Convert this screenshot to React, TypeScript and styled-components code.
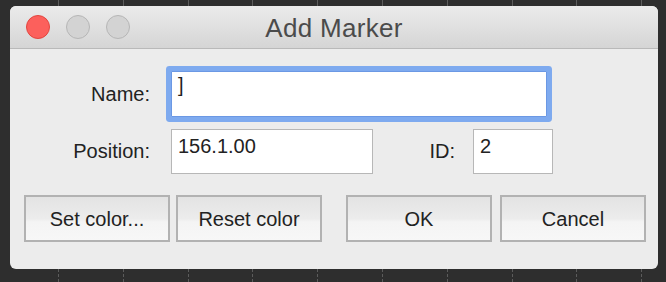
import React from "react";
import styled, { createGlobalStyle } from "styled-components";

const Global = createGlobalStyle`
  html, body { margin: 0; padding: 0; }
  body {
    width: 666px;
    height: 282px;
    overflow: hidden;
    background: #2e2e2e;
    font-family: "Liberation Sans", Arial, sans-serif;
  }
`;

const ticks = `repeating-linear-gradient(
    to right,
    transparent 0 58px,
    #5c5c5c 58px 59px,
    transparent 59px 64.8px
  )`;

const Desk = styled.div`
  width: 666px;
  height: 282px;
  box-sizing: border-box;
  padding: 6px 8px 0 10px;
  background-color: #2e2e2e;
  background-image:
    repeating-linear-gradient(to bottom, transparent 0 3px, #2e2e2e 3px 5px),
    ${ticks},
    ${ticks};
  background-repeat: no-repeat;
  background-size: 100% 13px, 100% 13px, 100% 6px;
  background-position: 0 269px, 0 269px, 0 0;
`;

const Window = styled.div`
  width: 648px;
  height: 263px;
  border-radius: 6px;
  overflow: hidden;
  background: #ececec;
  display: flex;
  flex-direction: column;
`;

const TitleBar = styled.div`
  height: 42px;
  border-bottom: 1px solid #b9b9b9;
  background: linear-gradient(#ebebeb, #d5d5d5);
  display: grid;
  grid-template-columns: 1fr auto 1fr;
  align-items: center;
  padding: 0 16px;
`;

const Lights = styled.div`
  display: flex;
  gap: 16px;
  align-items: center;
`;

const Light = styled.span<{ $red?: boolean }>`
  width: 24px;
  height: 24px;
  box-sizing: border-box;
  border-radius: 50%;
  background: ${(p) => (p.$red ? "#fc605c" : "#d3d3d3")};
  border: 1px solid ${(p) => (p.$red ? "#e2463f" : "#b6b6b6")};
`;

const Title = styled.div`
  font-size: 26px;
  color: #4b4b4b;
  padding-top: 3px;
  letter-spacing: 0.3px;
`;

const Body = styled.div`
  display: flex;
  flex-direction: column;
  padding: 22px 0 0 0;
`;

const Row = styled.div<{ $mt?: number }>`
  display: flex;
  align-items: center;
  margin-top: ${(p) => p.$mt ?? 0}px;
`;

const Label = styled.label<{ $w: number; $gap: number }>`
  width: ${(p) => p.$w}px;
  margin-right: ${(p) => p.$gap}px;
  text-align: right;
  font-size: 20px;
  color: #222;
`;

const Field = styled.div<{ $w: number; $h: number; $focus?: boolean; $pt: number }>`
  width: ${(p) => p.$w}px;
  height: ${(p) => p.$h}px;
  box-sizing: border-box;
  background: #fff;
  border: 1px solid ${(p) => (p.$focus ? "#6b98e4" : "#b7b7b7")};
  box-shadow: ${(p) => (p.$focus ? "0 0 0 5px #7eaaef" : "none")};
  border-radius: ${(p) => (p.$focus ? "1px" : "0")};
  padding: ${(p) => p.$pt}px 6px 0 6px;
  font-size: 20px;
  line-height: 23px;
  color: #222;
`;

const Buttons = styled.div`
  display: flex;
  padding-left: 14px;
  margin-top: 21px;
`;

const Group = styled.div<{ $gap: number; $ml?: number }>`
  display: flex;
  gap: ${(p) => p.$gap}px;
  margin-left: ${(p) => p.$ml ?? 0}px;
`;

const Button = styled.button`
  width: 146px;
  height: 47px;
  box-sizing: border-box;
  border: 2px solid #b2b2b2;
  border-radius: 0;
  background: linear-gradient(#e3e3e3 0%, #ececec 50%, #f4f4f4 58%, #f7f7f7 100%);
  font-family: "Liberation Sans", Arial, sans-serif;
  font-size: 20px;
  color: #222;
  padding: 2px 0 0 0;
`;

export default function App() {
  return (
    <>
      <Global />
      <Desk>
        <Window>
          <TitleBar>
            <Lights>
              <Light $red />
              <Light />
              <Light />
            </Lights>
            <Title>Add Marker</Title>
            <div />
          </TitleBar>
          <Body>
            <Row>
              <Label $w={140} $gap={21}>Name:</Label>
              <Field $w={376} $h={46} $focus $pt={2}>]</Field>
            </Row>
            <Row $mt={12}>
              <Label $w={140} $gap={21}>Position:</Label>
              <Field $w={202} $h={45} $pt={5}>156.1.00</Field>
              <Label $w={82} $gap={18}>ID:</Label>
              <Field $w={80} $h={45} $pt={5}>2</Field>
            </Row>
            <Buttons>
              <Group $gap={6}>
                <Button>Set color...</Button>
                <Button>Reset color</Button>
              </Group>
              <Group $gap={8} $ml={24}>
                <Button>OK</Button>
                <Button>Cancel</Button>
              </Group>
            </Buttons>
          </Body>
        </Window>
      </Desk>
    </>
  );
}
